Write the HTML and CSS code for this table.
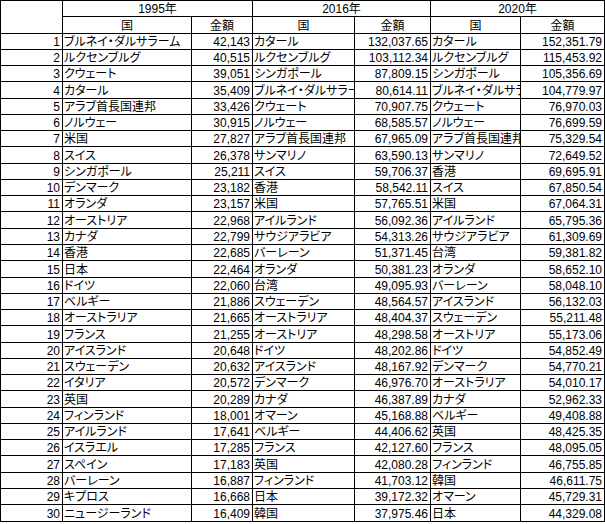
FILE: index.html
```html
<!DOCTYPE html>
<html lang="ja">
<head>
<meta charset="utf-8">
<link rel="stylesheet" href="styles.css">
</head>
<body>
<table class="sheet">
<colgroup>
<col class="c-no"><col class="c-n95"><col class="c-v95"><col class="c-n16"><col class="c-v16"><col class="c-n20"><col class="c-v20">
</colgroup>
<thead>
<tr><th rowspan="2"></th><th colspan="2">1995年</th><th colspan="2">2016年</th><th colspan="2">2020年</th></tr>
<tr><th>国</th><th>金額</th><th>国</th><th>金額</th><th>国</th><th>金額</th></tr>
</thead>
<tbody>
<tr><td class="no">1</td><td class="nm">ブルネイ・ダルサラーム</td><td class="v">42,143</td><td class="nm">カタール</td><td class="v">132,037.65</td><td class="nm">カタール</td><td class="v">152,351.79</td></tr>
<tr><td class="no">2</td><td class="nm">ルクセンブルグ</td><td class="v">40,515</td><td class="nm">ルクセンブルグ</td><td class="v">103,112.34</td><td class="nm">ルクセンブルグ</td><td class="v">115,453.92</td></tr>
<tr><td class="no">3</td><td class="nm">クウェート</td><td class="v">39,051</td><td class="nm">シンガポール</td><td class="v">87,809.15</td><td class="nm">シンガポール</td><td class="v">105,356.69</td></tr>
<tr><td class="no">4</td><td class="nm">カタール</td><td class="v">35,409</td><td class="nm"><div class="clip">ブルネイ・ダルサラーム</div></td><td class="v">80,614.11</td><td class="nm"><div class="clip">ブルネイ・ダルサラーム</div></td><td class="v">104,779.97</td></tr>
<tr><td class="no">5</td><td class="nm">アラブ首長国連邦</td><td class="v">33,426</td><td class="nm">クウェート</td><td class="v">70,907.75</td><td class="nm">クウェート</td><td class="v">76,970.03</td></tr>
<tr><td class="no">6</td><td class="nm">ノルウェー</td><td class="v">30,915</td><td class="nm">ノルウェー</td><td class="v">68,585.57</td><td class="nm">ノルウェー</td><td class="v">76,699.59</td></tr>
<tr><td class="no">7</td><td class="nm">米国</td><td class="v">27,827</td><td class="nm">アラブ首長国連邦</td><td class="v">67,965.09</td><td class="nm"><div class="clip">アラブ首長国連邦</div></td><td class="v">75,329.54</td></tr>
<tr><td class="no">8</td><td class="nm">スイス</td><td class="v">26,378</td><td class="nm">サンマリノ</td><td class="v">63,590.13</td><td class="nm">サンマリノ</td><td class="v">72,649.52</td></tr>
<tr><td class="no">9</td><td class="nm">シンガポール</td><td class="v">25,211</td><td class="nm">スイス</td><td class="v">59,706.37</td><td class="nm">香港</td><td class="v">69,695.91</td></tr>
<tr><td class="no">10</td><td class="nm">デンマーク</td><td class="v">23,182</td><td class="nm">香港</td><td class="v">58,542.11</td><td class="nm">スイス</td><td class="v">67,850.54</td></tr>
<tr><td class="no">11</td><td class="nm">オランダ</td><td class="v">23,157</td><td class="nm">米国</td><td class="v">57,765.51</td><td class="nm">米国</td><td class="v">67,064.31</td></tr>
<tr><td class="no">12</td><td class="nm">オーストリア</td><td class="v">22,968</td><td class="nm">アイルランド</td><td class="v">56,092.36</td><td class="nm">アイルランド</td><td class="v">65,795.36</td></tr>
<tr><td class="no">13</td><td class="nm">カナダ</td><td class="v">22,799</td><td class="nm">サウジアラビア</td><td class="v">54,313.26</td><td class="nm">サウジアラビア</td><td class="v">61,309.69</td></tr>
<tr><td class="no">14</td><td class="nm">香港</td><td class="v">22,685</td><td class="nm">バーレーン</td><td class="v">51,371.45</td><td class="nm">台湾</td><td class="v">59,381.82</td></tr>
<tr><td class="no">15</td><td class="nm">日本</td><td class="v">22,464</td><td class="nm">オランダ</td><td class="v">50,381.23</td><td class="nm">オランダ</td><td class="v">58,652.10</td></tr>
<tr><td class="no">16</td><td class="nm">ドイツ</td><td class="v">22,060</td><td class="nm">台湾</td><td class="v">49,095.93</td><td class="nm">バーレーン</td><td class="v">58,048.10</td></tr>
<tr><td class="no">17</td><td class="nm">ベルギー</td><td class="v">21,886</td><td class="nm">スウェーデン</td><td class="v">48,564.57</td><td class="nm">アイスランド</td><td class="v">56,132.03</td></tr>
<tr><td class="no">18</td><td class="nm">オーストラリア</td><td class="v">21,665</td><td class="nm">オーストラリア</td><td class="v">48,404.37</td><td class="nm">スウェーデン</td><td class="v">55,211.48</td></tr>
<tr><td class="no">19</td><td class="nm">フランス</td><td class="v">21,255</td><td class="nm">オーストリア</td><td class="v">48,298.58</td><td class="nm">オーストリア</td><td class="v">55,173.06</td></tr>
<tr><td class="no">20</td><td class="nm">アイスランド</td><td class="v">20,648</td><td class="nm">ドイツ</td><td class="v">48,202.86</td><td class="nm">ドイツ</td><td class="v">54,852.49</td></tr>
<tr><td class="no">21</td><td class="nm">スウェーデン</td><td class="v">20,632</td><td class="nm">アイスランド</td><td class="v">48,167.92</td><td class="nm">デンマーク</td><td class="v">54,770.21</td></tr>
<tr><td class="no">22</td><td class="nm">イタリア</td><td class="v">20,572</td><td class="nm">デンマーク</td><td class="v">46,976.70</td><td class="nm">オーストラリア</td><td class="v">54,010.17</td></tr>
<tr><td class="no">23</td><td class="nm">英国</td><td class="v">20,289</td><td class="nm">カナダ</td><td class="v">46,387.89</td><td class="nm">カナダ</td><td class="v">52,962.33</td></tr>
<tr><td class="no">24</td><td class="nm">フィンランド</td><td class="v">18,001</td><td class="nm">オマーン</td><td class="v">45,168.88</td><td class="nm">ベルギー</td><td class="v">49,408.88</td></tr>
<tr><td class="no">25</td><td class="nm">アイルランド</td><td class="v">17,641</td><td class="nm">ベルギー</td><td class="v">44,406.62</td><td class="nm">英国</td><td class="v">48,425.35</td></tr>
<tr><td class="no">26</td><td class="nm">イスラエル</td><td class="v">17,285</td><td class="nm">フランス</td><td class="v">42,127.60</td><td class="nm">フランス</td><td class="v">48,095.05</td></tr>
<tr><td class="no">27</td><td class="nm">スペイン</td><td class="v">17,183</td><td class="nm">英国</td><td class="v">42,080.28</td><td class="nm">フィンランド</td><td class="v">46,755.85</td></tr>
<tr><td class="no">28</td><td class="nm">バーレーン</td><td class="v">16,887</td><td class="nm">フィンランド</td><td class="v">41,703.12</td><td class="nm">韓国</td><td class="v">46,611.75</td></tr>
<tr><td class="no">29</td><td class="nm">キプロス</td><td class="v">16,668</td><td class="nm">日本</td><td class="v">39,172.32</td><td class="nm">オマーン</td><td class="v">45,729.31</td></tr>
<tr><td class="no">30</td><td class="nm">ニュージーランド</td><td class="v">16,409</td><td class="nm">韓国</td><td class="v">37,975.46</td><td class="nm">日本</td><td class="v">44,329.08</td></tr>
</tbody>
</table>
</body>
</html>
```
FILE: styles.css
```css
html, body {
  margin: 0;
  padding: 0;
  background: #ffffff;
}
.sheet {
  border-collapse: collapse;
  table-layout: fixed;
  width: 604px;
  font-family: "Liberation Sans", "Noto Sans CJK JP", sans-serif;
  font-size: 12px;
  font-feature-settings: "palt";
  color: #000;
}
.c-no { width: 62px; }
.c-n95 { width: 129px; }
.c-v95 { width: 61px; }
.c-n16 { width: 102px; }
.c-v16 { width: 76px; }
.c-n20 { width: 90px; }
.c-v20 { width: 84px; }
.sheet th, .sheet td {
  border: 1px solid #000;
  box-sizing: border-box;
  height: 16.28px;
  padding: 0 2px 0 2px;
  line-height: 14px;
  vertical-align: bottom;
  white-space: nowrap;
  overflow: hidden;
  font-weight: normal;
}
.sheet th {
  text-align: center;
}
.sheet td.no, .sheet td.v {
  text-align: right;
}
.sheet td.nm {
  text-align: left;
  padding-left: 1px;
  padding-right: 0;
}
.clip {
  overflow: hidden;
  white-space: nowrap;
}
```
